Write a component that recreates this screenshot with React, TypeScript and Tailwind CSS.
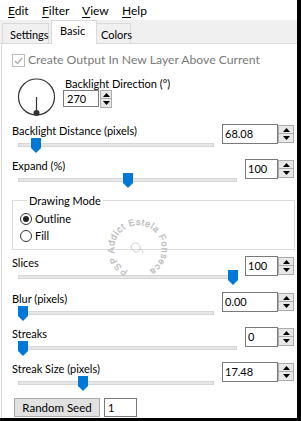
import React from "react";

// ----------------------------------------------------------------------------
// Small pieces
// ----------------------------------------------------------------------------

function Arrow({ up }: { up?: boolean }) {
  return (
    <svg width="7" height="4" viewBox="0 0 7 4">
      {up ? <path d="M0 4H7L3.5 0Z" fill="#000" /> : <path d="M0 0H7L3.5 4Z" fill="#000" />}
    </svg>
  );
}

function Spinner({ w }: { w: string }) {
  return (
    <div className={`flex h-[18px] ${w} flex-col self-center`}>
      <div className="flex h-[9px] items-center justify-center border border-[#adadad] bg-[#e8e8e8]">
        <Arrow up />
      </div>
      <div className="flex h-[9px] items-center justify-center border border-t-0 border-[#adadad] bg-[#e8e8e8]">
        <Arrow />
      </div>
    </div>
  );
}

function SpinBox({ value, w }: { value: string; w: string }) {
  return (
    <div className="flex">
      <div className={`h-[20px] ${w} border border-[#7a7a7a] pl-[2px] leading-[18px]`}>{value}</div>
      <Spinner w="w-[16px]" />
    </div>
  );
}

function Thumb() {
  return (
    <svg width="10" height="15" viewBox="0 0 10 15">
      <path d="M0 0H10V10L5 15L0 10Z" fill="#0078d7" />
    </svg>
  );
}

type RowProps = {
  label: string;
  value: string;
  inputW: string;
  thumb: number;
  className: string;
};

function SliderRow({ label, value, inputW, thumb, className }: RowProps) {
  return (
    <div className={`flex pl-[10px] pr-[3px] ${className}`}>
      <div className="mr-[8px] flex-1">
        <div className="h-[15px] leading-[15px]">{label}</div>
        <div className="relative ml-[6px] h-[15px] pt-[5px]">
          <div className="h-[4px] border border-[#d6d6d6] bg-[#e7e7e7]" />
          <div className="absolute top-0" style={{ left: thumb }}>
            <Thumb />
          </div>
        </div>
      </div>
      <div className="mt-[1px]">
        <SpinBox value={value} w={inputW} />
      </div>
    </div>
  );
}

function Radio({ label, checked }: { label: string; checked?: boolean }) {
  return (
    <div className="flex h-[15px] items-center">
      <div className="flex h-[12px] w-[12px] items-center justify-center rounded-full border border-[#333]">
        {checked && <div className="h-[6px] w-[6px] rounded-full bg-[#222]" />}
      </div>
      <span className="ml-[3px] leading-[15px]">{label}</span>
    </div>
  );
}

// ----------------------------------------------------------------------------

export default function App() {
  return (
    <div className="relative h-[421px] w-[301px] overflow-hidden border-r-[4px] border-b-[3px] border-black bg-white text-[11px] text-black [font-family:Lato,sans-serif]">
      {/* MENY */}
      <div className="flex h-[20px] pl-[8px] pt-[1px] text-[12px] leading-[20px]">
        <span className="w-[34px]"><u className="underline-offset-2">E</u>dit</span>
        <span className="w-[40px]"><u className="underline-offset-2">F</u>ilter</span>
        <span className="w-[40px]"><u className="underline-offset-2">V</u>iew</span>
        <span><u className="underline-offset-2">H</u>elp</span>
      </div>

      {/* FLIKAR */}
      <div className="flex h-[24px] items-end border-b border-[#d9d9d9] bg-[#f0f0f0] pl-[2px] text-[11px]">
        <div className="mb-[-1px] h-[21px] w-[47px] border border-b-0 border-[#d9d9d9] pl-[7px] pt-[1px] leading-[20px]">
          Settings
        </div>
        <div className="mb-[-1px] ml-[2px] h-[24px] w-[46px] border border-b-0 border-[#d9d9d9] bg-white pl-[8px] leading-[20px]">
          Basic
        </div>
        <div className="mb-[-1px] h-[21px] w-[34px] border border-b-0 border-l-0 border-[#d9d9d9] pl-[4px] pt-[1px] leading-[20px]">
          Colors
        </div>
      </div>

      {/* PANEL */}
      <div className="ml-[1px] h-[374px] border-l border-[#dadada]">
        <div className="box-content flex h-[15px] items-center pl-[10px] pt-[9px]">
          <div className="flex h-[13px] w-[13px] items-center justify-center border border-[#bcbcbc]">
            <svg width="9" height="8" viewBox="0 0 9 8">
              <path d="M1 4L3.5 6.5L8 1" fill="none" stroke="#a8a8a8" strokeWidth="1.3" />
            </svg>
          </div>
          <span className="ml-[3px] text-[12.2px] text-[#7a7a7a]">Create Output In New Layer Above Current</span>
        </div>

        {/* Riktning */}
        <div className="mt-[9px] flex h-[41px] pl-[14px]">
          <svg width="41" height="41" viewBox="0 0 41 41">
            <circle cx="20.5" cy="20" r="18" fill="none" stroke="#333" strokeWidth="1.2" />
            <line x1="20.5" y1="20" x2="20.5" y2="36" stroke="#333" strokeWidth="1.2" />
            <circle cx="20.5" cy="36" r="3" fill="#333" />
          </svg>
          <div className="ml-[6px]">
            <div className="ml-[2px] h-[13px] leading-[13px]">Backlight Direction (°)</div>
            <div className="flex">
              <div className="h-[17px] w-[36px] border border-[#7a7a7a] pl-[3px] leading-[15px]">270</div>
              <div className="ml-[1px]">
                <Spinner w="w-[12px]" />
              </div>
            </div>
          </div>
        </div>

        <SliderRow className="mt-[5px]" label="Backlight Distance (pixels)" value="68.08" inputW="w-[56px]" thumb={13} />
        <SliderRow className="mt-[5px]" label="Expand (%)" value="100" inputW="w-[33px]" thumb={105} />

        {/* Ritläge */}
        <fieldset className="ml-[10px] mr-[2px] mt-[5px] border border-[#dcdcdc] pb-[6px] pl-[7px]">
          <legend className="ml-[7px] h-[15px] px-[2px] leading-[15px]">Drawing Mode</legend>
          <div className="mt-[3px] flex flex-col gap-[2px]">
            <Radio label="Outline" checked />
            <Radio label="Fill" />
          </div>
        </fieldset>

        <SliderRow className="mt-[5px]" label="Slices" value="100" inputW="w-[33px]" thumb={210} />
        <SliderRow className="mt-[6px]" label="Blur (pixels)" value="0.00" inputW="w-[56px]" thumb={0} />
        <SliderRow className="mt-[5px]" label="Streaks" value="0" inputW="w-[33px]" thumb={0} />
        <SliderRow className="mt-[5px]" label="Streak Size (pixels)" value="17.48" inputW="w-[56px]" thumb={60} />

        <div className="ml-[12px] mt-[7px] flex">
          <div className="flex h-[19px] w-[86px] items-center justify-center border border-[#adadad] bg-[#e1e1e1] text-[11.5px]">
            Random Seed
          </div>
          <div className="ml-[4px] h-[19px] w-[33px] border border-[#7a7a7a] pl-[3px] leading-[17px]">1</div>
        </div>
      </div>

      {/* Vattenstämpel */}
      <svg className="pointer-events-none absolute left-[100px] top-[211px]" width="76" height="76" viewBox="0 0 76 76">
        <path id="wm" d="M27.9 59.8 A24 24 0 1 1 48.1 16.2 A24 24 0 1 1 27.9 59.8" fill="none" />
        <text fontSize="9" fill="#cccccc" stroke="#b0b0b0" strokeWidth="0.3" fontFamily="Liberation Sans, sans-serif">
          <textPath href="#wm" textLength="128" lengthAdjust="spacing">PSP Addict Estela Fonseca</textPath>
        </text>
        <path d="M31 35c2-4 8-4 9 0s-3 7-5 6-4-3-4-6zM40 37c2 1 4 4 2 6" fill="none" stroke="#c0c0c0" strokeWidth="0.8" />
      </svg>
    </div>
  );
}
